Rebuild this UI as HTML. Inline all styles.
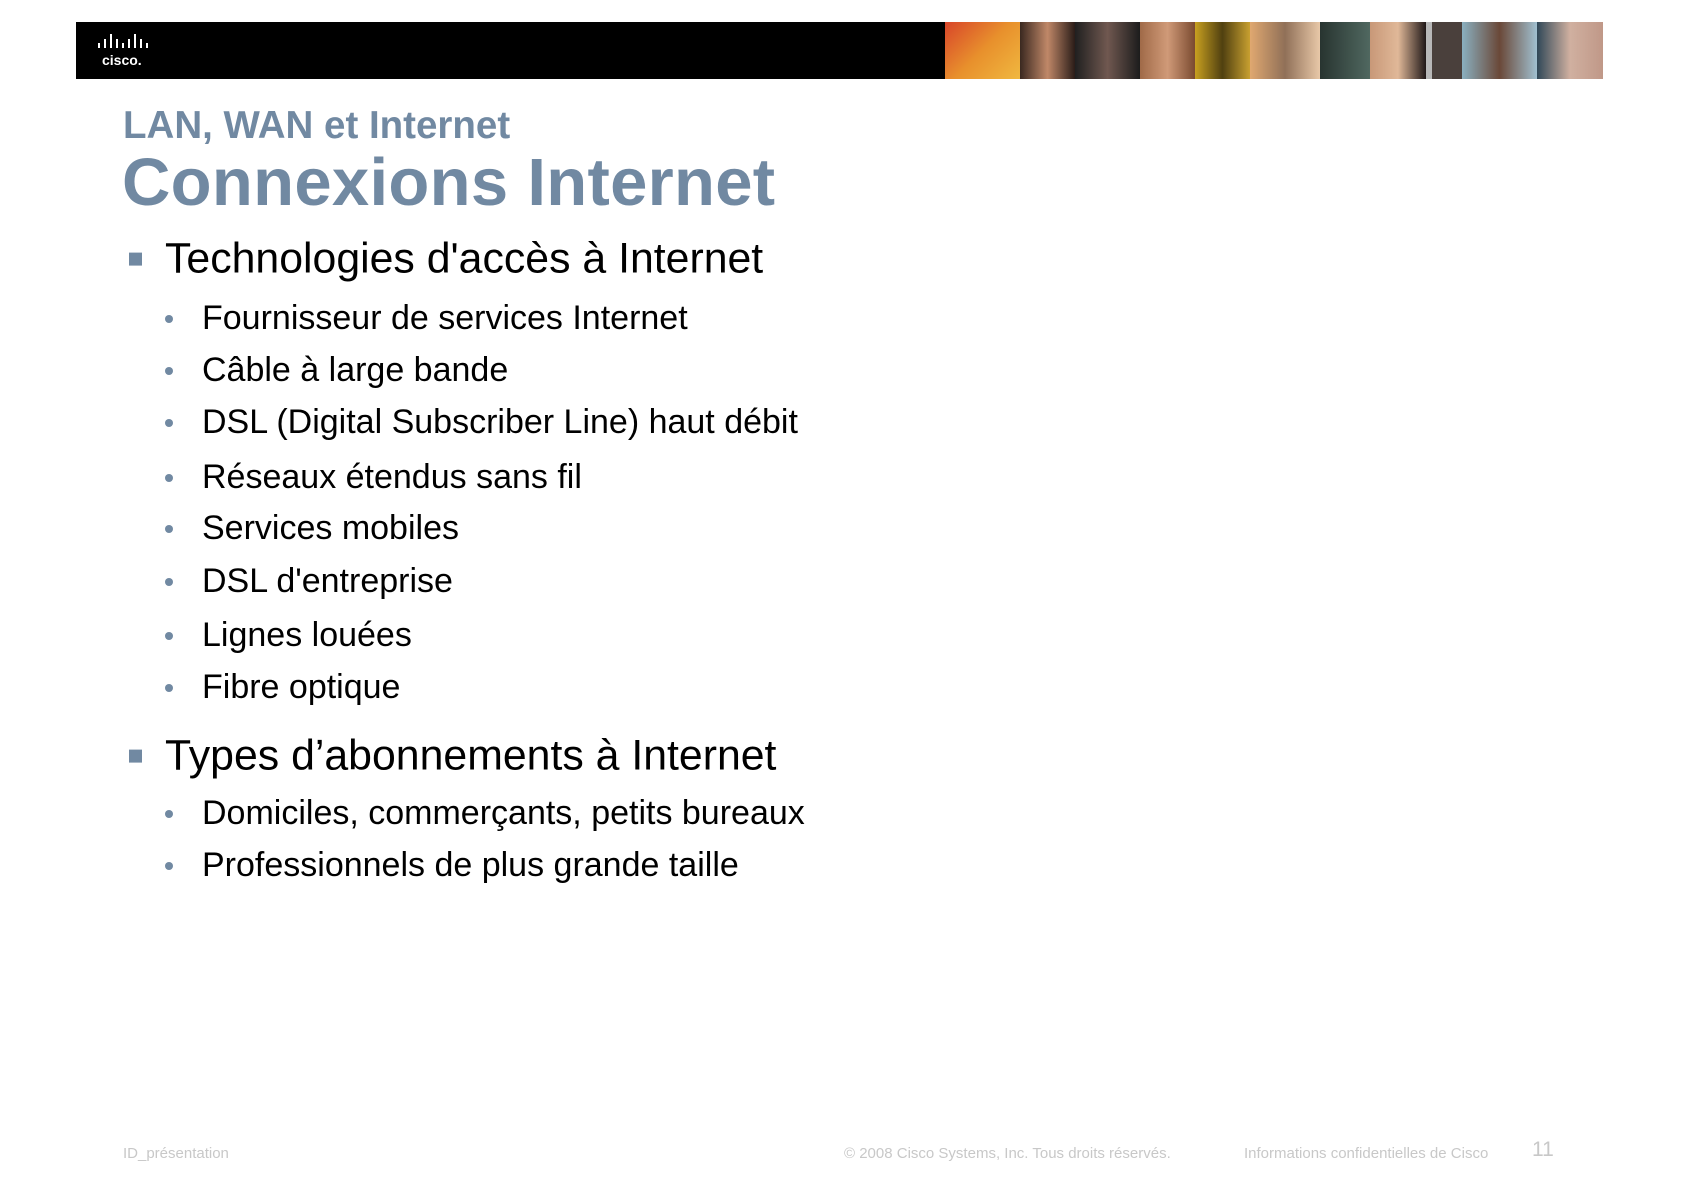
<!DOCTYPE html>
<html><head><meta charset="utf-8"><style>
*{margin:0;padding:0}
body{width:1683px;height:1190px;background:#fff;position:relative;overflow:hidden;font-family:"Liberation Sans",Arial,sans-serif}
.bar{position:absolute;left:76px;top:22px;width:1527px;height:57px;background:#000}
.ph{position:absolute;top:22px;height:57px}
.t1{position:absolute;left:123px;top:104px;font-size:38.5px;font-weight:bold;color:#7189a2}
.t2{position:absolute;left:122px;top:144px;font-size:67px;font-weight:bold;color:#7189a2;letter-spacing:0.3px}
.l1{position:absolute;left:165px;font-size:42.8px;color:#000;line-height:1;transform:translateY(-50%)}
.l1:before{content:"";position:absolute;left:-36px;top:15px;width:13px;height:13px;background:#7189a2}
.l2{position:absolute;left:202px;font-size:34px;color:#000;line-height:1;transform:translateY(-50%)}
.l2:before{content:"";position:absolute;left:-37px;top:14px;width:8px;height:8px;border-radius:50%;background:#7189a2}
.f{position:absolute;top:1145px;font-size:15px;color:#c8c8c8}
</style></head><body>
<div class="bar"></div>
<svg style="position:absolute;left:98px;top:34px" width="64" height="36">
<g fill="#fff"><rect x="0" y="9" width="2" height="5"/><rect x="6" y="5" width="2" height="9"/><rect x="12" y="0" width="2" height="14"/><rect x="18" y="5" width="2" height="9"/><rect x="24" y="9" width="2" height="5"/><rect x="30" y="5" width="2" height="9"/><rect x="36" y="0" width="2" height="14"/><rect x="42" y="5" width="2" height="9"/><rect x="48" y="9" width="2" height="5"/></g>
<text x="4" y="31" fill="#fff" font-family="Liberation Sans" font-weight="bold" font-size="14">cisco.</text></svg>
<div class="ph" style="left:945px;width:75px;background:linear-gradient(135deg,#d8452a,#e8902c,#f0b840)"></div>
<div class="ph" style="left:1020px;width:55px;background:linear-gradient(90deg,#3a2820,#c08868,#2a1c18)"></div>
<div class="ph" style="left:1075px;width:65px;background:linear-gradient(90deg,#202020,#705850,#1c1c1c)"></div>
<div class="ph" style="left:1140px;width:55px;background:linear-gradient(90deg,#a06a48,#d09a78,#7a4a30)"></div>
<div class="ph" style="left:1195px;width:55px;background:linear-gradient(90deg,#c8a020,#504010,#c8a030)"></div>
<div class="ph" style="left:1250px;width:70px;background:linear-gradient(90deg,#e0a870,#907058,#e8c8a8)"></div>
<div class="ph" style="left:1320px;width:50px;background:linear-gradient(90deg,#283430,#506860)"></div>
<div class="ph" style="left:1370px;width:56px;background:linear-gradient(90deg,#c89878,#e0b898,#201818)"></div>
<div class="ph" style="left:1426px;width:6px;background:#b8b8b8"></div>
<div class="ph" style="left:1432px;width:30px;background:#4a403c"></div>
<div class="ph" style="left:1462px;width:75px;background:linear-gradient(90deg,#8ab0c0,#6a4838,#a0c0d0)"></div>
<div class="ph" style="left:1537px;width:66px;background:linear-gradient(90deg,#304858,#d0b0a0,#c09888)"></div>
<div class="t1">LAN, WAN et Internet</div>
<div class="t2">Connexions Internet</div>
<div class="l1" style="top:259px">Technologies d'accès à Internet</div>
<div class="l2" style="top:318px">Fournisseur de services Internet</div>
<div class="l2" style="top:370px">Câble à large bande</div>
<div class="l2" style="top:422px">DSL (Digital Subscriber Line) haut débit</div>
<div class="l2" style="top:477px">Réseaux étendus sans fil</div>
<div class="l2" style="top:528px">Services mobiles</div>
<div class="l2" style="top:581px">DSL d'entreprise</div>
<div class="l2" style="top:635px">Lignes louées</div>
<div class="l2" style="top:687px">Fibre optique</div>
<div class="l1" style="top:756px">Types d’abonnements à Internet</div>
<div class="l2" style="top:813px">Domiciles, commerçants, petits bureaux</div>
<div class="l2" style="top:865px">Professionnels de plus grande taille</div>
<div class="f" style="left:123px">ID_présentation</div>
<div class="f" style="left:844px">© 2008 Cisco Systems, Inc. Tous droits réservés.</div>
<div class="f" style="left:1244px">Informations confidentielles de Cisco</div>
<div class="f" style="left:1532px;top:1138px;font-size:21px">11</div>
</body></html>
